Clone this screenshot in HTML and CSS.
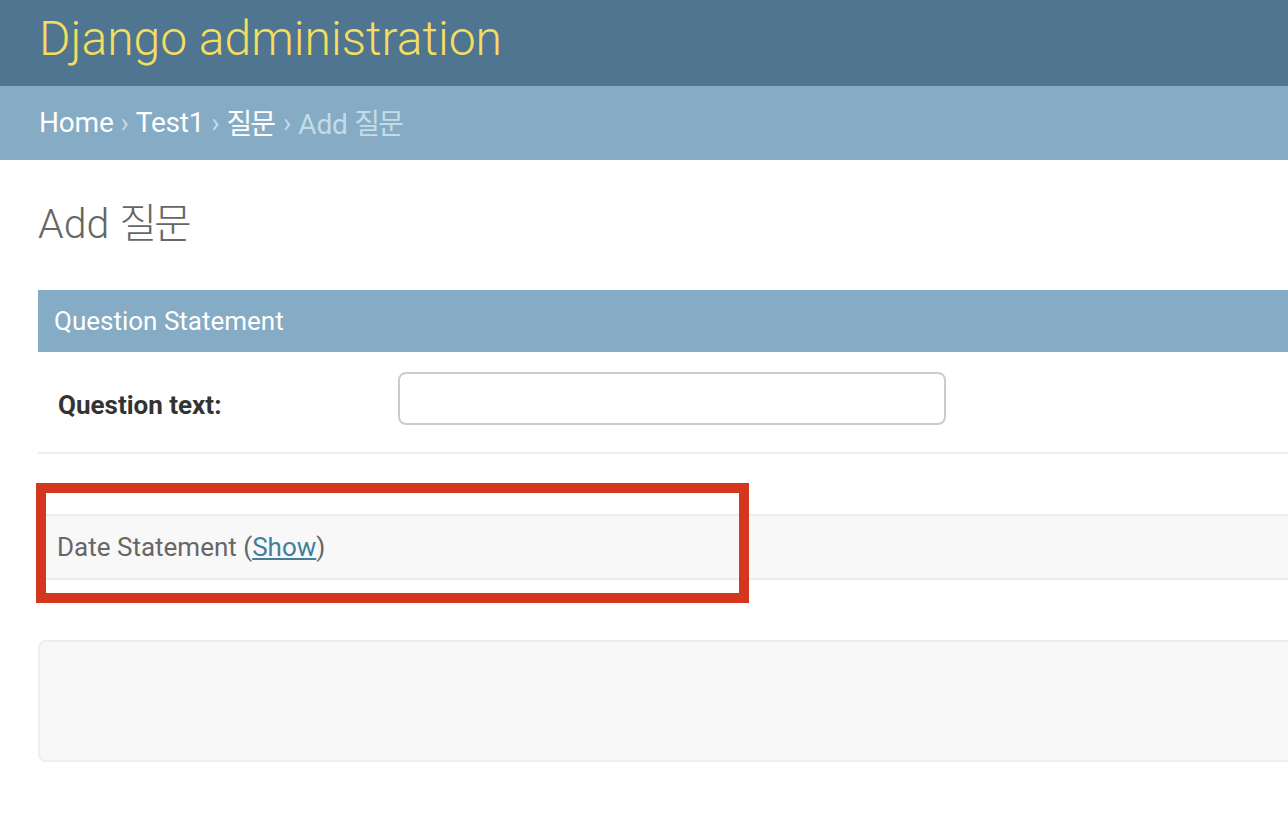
FILE: index.html
```html
<!DOCTYPE html>
<html lang="ko">
<head>
<meta charset="utf-8">
<title>Add 질문 | Django site admin</title>
<link rel="stylesheet" href="styles.css">
</head>
<body>
<div class="header">
  <h1 class="branding">Django administration</h1>
</div>
<div class="breadcrumbs">
  <a href="#">Home</a><span class="sep">›</span><a href="#">Test1</a><span class="sep">›</span><a href="#" class="ko">질문</a><span class="sep">›</span><span class="current">Add <span class="ko">질문</span></span>
</div>
<div class="content">
  <h1 class="page-title">Add <span class="ko">질문</span></h1>
  <div class="module">
    <h2 class="module-title">Question Statement</h2>
    <div class="form-row">
      <label class="label" for="q">Question text:</label>
      <input class="text-input" id="q" type="text">
    </div>
  </div>
  <div class="collapsed">
    <span class="collapsed-title">Date Statement (<a href="#" class="show-link">Show</a>)</span>
  </div>
  <div class="submit-row"></div>
</div>
<div class="annotation"></div>
</body>
</html>
```

FILE: styles.css
```css
html, body {
  margin: 0;
  padding: 0;
}
body {
  font-family: Roboto, "Noto Sans CJK KR", "Liberation Sans", sans-serif;
  background: #fff;
  color: #333;
  overflow: hidden;
  width: 1288px;
  height: 830px;
  position: relative;
}
.ko {
  letter-spacing: -0.07em;
  margin-right: 0.07em;
}
.header {
  height: 86px;
  background: #4f7591;
  display: flex;
  align-items: center;
  padding: 0 39px 8px;
  box-sizing: border-box;
}
.branding {
  margin: 0;
  font-size: 48px;
  font-weight: 300;
  color: #f5dd5d;
  line-height: 1;
}
.breadcrumbs {
  height: 74px;
  background: #85abc5;
  display: flex;
  align-items: center;
  padding: 0 39px 2px;
  box-sizing: border-box;
  font-size: 28px;
  color: #c4dce8;
  letter-spacing: -0.2px;
}
.breadcrumbs a {
  color: #fff;
  text-decoration: none;
}
.sep {
  margin: 0 7px;
}
.current {
  color: #c4dce8;
}
.content {
  padding: 0 0 0 38px;
  margin-right: -40px;
}
.page-title {
  margin: 0;
  padding: 40px 0 0;
  height: 130px;
  box-sizing: border-box;
  font-size: 41px;
  font-weight: 300;
  color: #666;
  line-height: 48px;
}
.module-title {
  margin: 0;
  height: 62px;
  line-height: 62px;
  background: #85abc5;
  color: #fff;
  font-size: 26px;
  font-weight: 400;
  padding-left: 16px;
}
.form-row {
  display: flex;
  align-items: flex-start;
  height: 102px;
  box-sizing: border-box;
  border-bottom: 2px solid #eee;
  padding: 20px 20px 0;
}
.label {
  width: 340px;
  font-size: 26px;
  font-weight: 700;
  color: #333;
  line-height: 30px;
  padding-top: 18px;
}
.text-input {
  width: 548px;
  height: 53px;
  box-sizing: border-box;
  border: 2px solid #ccc;
  border-radius: 8px;
  background: #fff;
  margin: 0;
}
.collapsed {
  margin-top: 60px;
  height: 66px;
  box-sizing: border-box;
  border-top: 2px solid #eee;
  border-bottom: 2px solid #eee;
  background: #f8f8f8;
  display: flex;
  align-items: center;
  padding-left: 19px;
  font-size: 26px;
  color: #666;
}
.show-link {
  color: #447e9b;
  text-decoration: underline;
}
.submit-row {
  margin-top: 60px;
  height: 122px;
  box-sizing: border-box;
  border: 2px solid #eee;
  border-radius: 8px;
  background: #f8f8f8;
}
.annotation {
  position: absolute;
  left: 36px;
  top: 483px;
  width: 713px;
  height: 120px;
  box-sizing: border-box;
  border: 10px solid #d3381f;
}
```
